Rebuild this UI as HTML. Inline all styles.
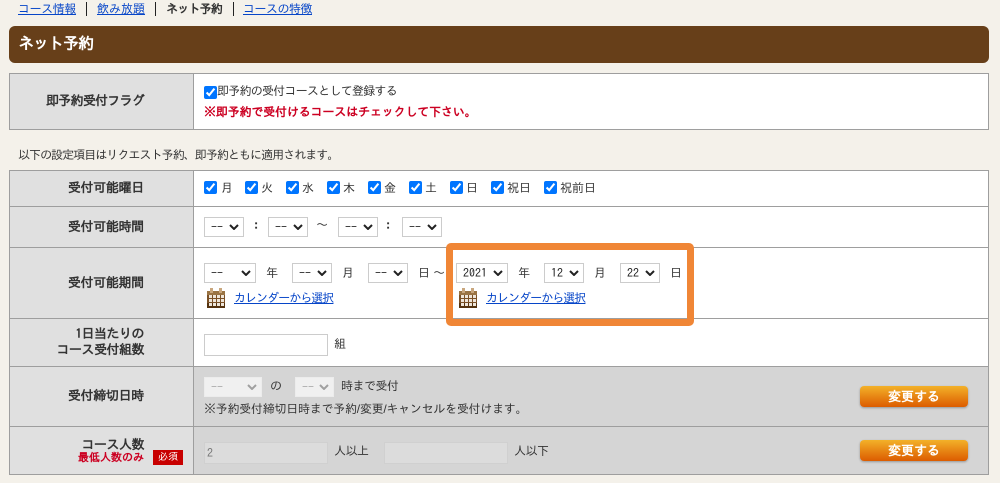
<!DOCTYPE html>
<html lang="ja"><head><meta charset="utf-8"><title>ネット予約</title>
<style>
html,body{margin:0;padding:0}
body{width:1000px;height:483px;overflow:hidden;position:relative;background:#f4f1ea;font-family:"Liberation Sans","IPAGothic","Noto Sans CJK JP",sans-serif;font-size:12px;color:#333}
.a{position:absolute;white-space:nowrap;line-height:14px}
.r{left:10px;width:134px;text-align:right;font-weight:bold;font-size:13px;font-family:"IPAGothic","Liberation Sans",sans-serif}
a{color:#0645c8;text-decoration:underline}
.box{position:absolute;box-sizing:border-box}
.th{position:absolute;left:10px;width:183px;background:#e0e0e0}
.td{position:absolute;left:194px;width:794px;background:#fff}
.g{background:#d5d5d5}
.l{position:absolute;left:9px;width:980px;height:1px;background:#9e9e9e}
select{position:absolute;box-sizing:border-box;height:20px;font-size:12px;font-family:"IPAGothic","Liberation Mono",monospace;background:#fff;border:1px solid #ccc;border-radius:0;color:#222;padding:0 0 0 6px;margin:0;appearance:none;-webkit-appearance:none}
select:disabled{background:#f0f0f0;border-color:#ececec;color:#aaa;opacity:1}
svg.c{position:absolute;width:10px;height:6px;fill:none;stroke:#222;stroke-width:2;pointer-events:none}
svg.c.d{stroke:#a0a0a0}
input[type=checkbox]{position:absolute;margin:0;width:13px;height:13px}
input[type=text]{position:absolute;box-sizing:border-box;margin:0;height:22px;border:1px solid #ccc;background:#fff;font-size:12px;padding:0 2px;font-family:"IPAGothic","Liberation Mono",monospace}
input[type=text]:disabled{background:#dcdcdc;border-color:#d0d0d0;color:#777}
.btn{position:absolute;left:860px;width:108px;height:21px;border-radius:4px;background:linear-gradient(#f3b129,#dc5c00);box-shadow:0 1px 2px rgba(0,0,0,.3);color:#fff;font-weight:bold;text-align:center;line-height:21px;font-size:13px}
.cal{position:absolute;width:20px;height:20px}
</style></head><body>
<svg width="0" height="0" style="position:absolute"><defs>
<symbol id="chev" viewBox="0 0 10 6"><path d="M1 1L5 5L9 1"/></symbol>
<symbol id="calico" viewBox="0 0 20 20"><rect x="1" y="3" width="18" height="17" rx="1" fill="#7a5026"/><rect x="1" y="3" width="18" height="4" fill="#9a7444"/><rect x="1" y="15" width="18" height="5" fill="#54320f"/><rect x="4" y="0" width="3" height="5" fill="#c9a77e"/><rect x="13" y="0" width="3" height="5" fill="#c9a77e"/><g fill="#efe6da"><rect x="3" y="7" width="3" height="3"/><rect x="7" y="7" width="3" height="3"/><rect x="11" y="7" width="3" height="3"/><rect x="15" y="7" width="3" height="3"/><rect x="3" y="11" width="3" height="3"/><rect x="7" y="11" width="3" height="3"/><rect x="11" y="11" width="3" height="3"/><rect x="15" y="11" width="3" height="3"/><rect x="3" y="15" width="3" height="3"/><rect x="7" y="15" width="3" height="3"/><rect x="11" y="15" width="3" height="3"/><rect x="15" y="15" width="3" height="3"/></g></symbol>
</defs></svg>

<div class="a" style="left:18px;top:2px;letter-spacing:-.4px"><a href="#">コース情報</a></div>
<div class="box" style="left:86px;top:2px;width:1px;height:14px;background:#222"></div>
<div class="a" style="left:97px;top:2px"><a href="#">飲み放題</a></div>
<div class="box" style="left:155px;top:2px;width:1px;height:14px;background:#222"></div>
<div class="a" style="left:166px;top:2px;font-weight:bold;letter-spacing:-.8px">ネット予約</div>
<div class="box" style="left:233px;top:2px;width:1px;height:14px;background:#222"></div>
<div class="a" style="left:243px;top:2px;letter-spacing:-.5px"><a href="#">コースの特徴</a></div>

<div class="box" style="left:9px;top:26px;width:980px;height:37px;background:#673f19;border-radius:6px"></div>
<div class="a" style="left:18px;top:37px;color:#fff;font-size:16px;line-height:16px;font-weight:bold;letter-spacing:-1px">ネット予約</div>

<div class="box" style="left:9px;top:73px;width:980px;height:57px;border:1px solid #9e9e9e;background:#fff"></div>
<div class="th" style="top:74px;height:55px"></div>
<div class="a r" style="top:94px;letter-spacing:-.75px">即予約受付フラグ</div>
<div class="box" style="left:193px;top:74px;width:1px;height:55px;background:#9e9e9e"></div>
<input type="checkbox" checked style="left:204px;top:86px">
<div class="a" style="left:217px;top:84px;letter-spacing:-.75px">即予約の受付コースとして登録する</div>
<div class="a" style="left:204px;top:105px;color:#cc0022;font-weight:bold;letter-spacing:-.15px">※即予約で受付けるコースはチェックして下さい。</div>

<div class="a" style="left:18px;top:148px;letter-spacing:-.95px">以下の設定項目はリクエスト予約、即予約ともに適用されます。</div>

<div class="box" style="left:9px;top:170px;width:980px;height:305px;border:1px solid #9e9e9e;background:#fff"></div>
<div class="td g" style="top:367px;height:107px"></div>
<div class="th" style="top:171px;height:303px"></div>
<div class="box" style="left:193px;top:171px;width:1px;height:303px;background:#9e9e9e"></div>
<div class="l" style="top:206px"></div>
<div class="l" style="top:247px"></div>
<div class="l" style="top:318px"></div>
<div class="l" style="top:366px"></div>
<div class="l" style="top:426px"></div>

<div class="a r" style="top:181px;letter-spacing:-.3px">受付可能曜日</div>
<div class="a r" style="top:220px;letter-spacing:-.3px">受付可能時間</div>
<div class="a r" style="top:276px;letter-spacing:-.3px">受付可能期間</div>
<div class="a r" style="top:326px;line-height:16px;letter-spacing:-.5px">1日当たりの<br>コース受付組数</div>
<div class="a r" style="top:389px;letter-spacing:-.3px">受付締切日時</div>
<div class="a r" style="top:437px;letter-spacing:-.5px;line-height:15px">コース人数</div>
<div class="a r" style="top:452px;font-size:11px;color:#cc0022;line-height:12px">最低人数のみ</div>
<div class="box" style="left:153px;top:450px;width:30px;height:15px;background:#c80000;color:#fff;font-size:10px;line-height:15px;text-align:center">必須</div>

<input type="checkbox" checked style="left:204px;top:181px"><div class="a" style="left:221px;top:181px">月</div>
<input type="checkbox" checked style="left:245px;top:181px"><div class="a" style="left:261px;top:181px">火</div>
<input type="checkbox" checked style="left:286px;top:181px"><div class="a" style="left:302px;top:181px">水</div>
<input type="checkbox" checked style="left:327px;top:181px"><div class="a" style="left:343px;top:181px">木</div>
<input type="checkbox" checked style="left:368px;top:181px"><div class="a" style="left:384px;top:181px">金</div>
<input type="checkbox" checked style="left:409px;top:181px"><div class="a" style="left:425px;top:181px">土</div>
<input type="checkbox" checked style="left:450px;top:181px"><div class="a" style="left:466px;top:181px">日</div>
<input type="checkbox" checked style="left:491px;top:181px"><div class="a" style="left:507px;top:181px">祝日</div>
<input type="checkbox" checked style="left:544px;top:181px"><div class="a" style="left:560px;top:181px">祝前日</div>

<select style="left:204px;top:217px;width:40px"><option>--</option></select><svg class="c" style="left:229px;top:224px"><use href="#chev"/></svg>
<div class="a" style="left:250px;top:218px;font-weight:bold">：</div>
<select style="left:268px;top:217px;width:40px"><option>--</option></select><svg class="c" style="left:293px;top:224px"><use href="#chev"/></svg>
<div class="a" style="left:316px;top:218px">～</div>
<select style="left:338px;top:217px;width:40px"><option>--</option></select><svg class="c" style="left:363px;top:224px"><use href="#chev"/></svg>
<div class="a" style="left:382px;top:218px;font-weight:bold">：</div>
<select style="left:402px;top:217px;width:40px"><option>--</option></select><svg class="c" style="left:427px;top:224px"><use href="#chev"/></svg>

<select style="left:204px;top:263px;width:52px"><option>--</option></select><svg class="c" style="left:241px;top:270px"><use href="#chev"/></svg>
<div class="a" style="left:266px;top:266px">年</div>
<select style="left:292px;top:263px;width:40px"><option>--</option></select><svg class="c" style="left:317px;top:270px"><use href="#chev"/></svg>
<div class="a" style="left:342px;top:266px">月</div>
<select style="left:368px;top:263px;width:40px"><option>--</option></select><svg class="c" style="left:393px;top:270px"><use href="#chev"/></svg>
<div class="a" style="left:418px;top:266px">日</div>
<div class="a" style="left:433px;top:266px">～</div>
<select style="left:456px;top:263px;width:52px"><option>2021</option></select><svg class="c" style="left:493px;top:270px"><use href="#chev"/></svg>
<div class="a" style="left:518px;top:266px">年</div>
<select style="left:544px;top:263px;width:40px"><option>12</option></select><svg class="c" style="left:569px;top:270px"><use href="#chev"/></svg>
<div class="a" style="left:594px;top:266px">月</div>
<select style="left:620px;top:263px;width:40px"><option>22</option></select><svg class="c" style="left:645px;top:270px"><use href="#chev"/></svg>
<div class="a" style="left:670px;top:266px">日</div>

<svg class="cal" style="left:206px;top:288px"><use href="#calico"/></svg>
<div class="a" style="left:234px;top:291px;letter-spacing:-.95px"><a href="#">カレンダーから選択</a></div>
<svg class="cal" style="left:458px;top:288px"><use href="#calico"/></svg>
<div class="a" style="left:486px;top:291px;letter-spacing:-.95px"><a href="#">カレンダーから選択</a></div>

<div class="box" style="left:446px;top:243px;width:248px;height:83px;border:7px solid #f08636;border-radius:5px"></div>

<input type="text" style="left:204px;top:334px;width:124px">
<div class="a" style="left:334px;top:337px">組</div>

<select disabled style="left:204px;top:377px;width:58px"><option>--</option></select><svg class="c d" style="left:247px;top:384px"><use href="#chev"/></svg>
<div class="a" style="left:270px;top:379px">の</div>
<select disabled style="left:295px;top:377px;width:39px"><option>--</option></select><svg class="c d" style="left:319px;top:384px"><use href="#chev"/></svg>
<div class="a" style="left:341px;top:379px;letter-spacing:-.5px">時まで受付</div>
<div class="a" style="left:204px;top:402px;letter-spacing:-.25px">※予約受付締切日時まで予約/変更/キャンセルを受付けます。</div>
<div class="btn" style="top:386px">変更する</div>

<input type="text" disabled value="2" style="left:204px;top:442px;width:124px">
<div class="a" style="left:334px;top:444px;letter-spacing:-.5px">人以上</div>
<input type="text" disabled style="left:384px;top:442px;width:124px">
<div class="a" style="left:514px;top:444px;letter-spacing:-.5px">人以下</div>
<div class="btn" style="top:440px">変更する</div>
</body></html>
